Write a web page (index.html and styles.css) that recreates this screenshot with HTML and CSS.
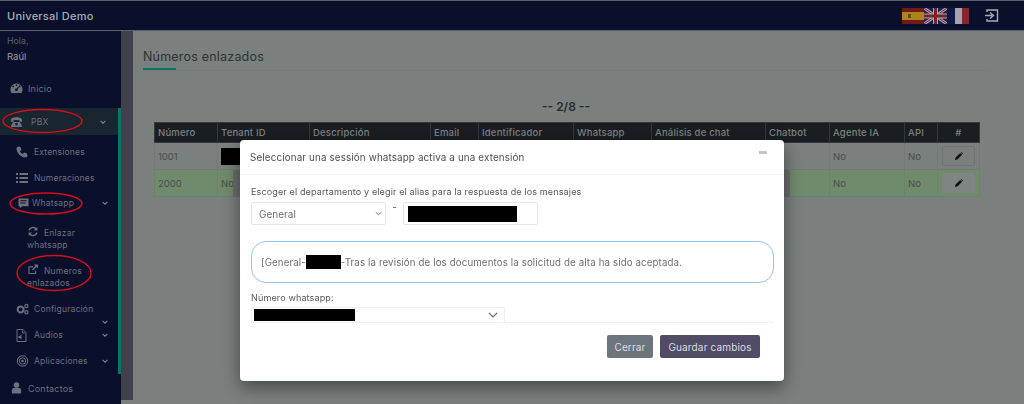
FILE: index.html
```html
<!DOCTYPE html>
<html lang="es">
<head>
<meta charset="utf-8">
<title>Números enlazados</title>
<link rel="stylesheet" href="styles.css">
</head>
<body>
<header class="topbar">
  <div class="brand">Universal Demo</div>
  <div class="top-actions">
    <svg class="flag" width="22" height="16" viewBox="0 0 22 16"><rect width="22" height="16" fill="#701a1c"/><rect y="4" width="22" height="8" fill="#a8861c"/><rect x="6" y="6" width="3" height="4" fill="#7a3a20"/></svg>
    <svg class="flag" width="23" height="16" viewBox="0 0 23 16"><rect width="23" height="16" fill="#1c2150"/><path d="M0 0L23 16M23 0L0 16" stroke="#a8a8b0" stroke-width="3"/><path d="M0 0L23 16M23 0L0 16" stroke="#7a2228" stroke-width="1"/><path d="M11.5 0V16M0 8H23" stroke="#a8a8b0" stroke-width="5"/><path d="M11.5 0V16M0 8H23" stroke="#7a2228" stroke-width="3"/></svg>
    <svg class="flag" width="22" height="16" viewBox="0 0 22 16"><rect width="8" height="16" fill="#10184a"/><rect x="8" width="7" height="16" fill="#a4a4aa"/><rect x="15" width="7" height="16" fill="#84262e"/></svg>
    <svg class="logout" width="14" height="15" viewBox="0 0 14 15" fill="none" stroke="#a9adb0" stroke-width="1.4"><path d="M2 4V2h10.500v11H2v-2"/><path d="M0 7.500h7M5 4.500l3.500 3-3.500 3"/></svg>
  </div>
</header>

<div class="shell">
  <aside class="sidebar">
    <div class="greeting">
      <div class="hola">Hola,</div>
      <div class="user">Raúl</div>
    </div>
    <a class="item top"><svg class="ic" viewBox="0 0 16 13"><path d="M8 1a7.500 7.500 0 0 0-7.500 7.500c0 1.600.5 3 1.300 4.200h12.400c.8-1.200 1.300-2.600 1.300-4.200A7.500 7.500 0 0 0 8 1zM4 3.500a1 1 0 1 1 0 2 1 1 0 0 1 0-2zM12 3.500a1 1 0 1 1 0 2 1 1 0 0 1 0-2zM8 2a1 1 0 1 1 0 2 1 1 0 0 1 0-2zM8 7l2.500-2.500.8.6L9.300 8A1.600 1.600 0 1 1 8 7z" fill-rule="evenodd"/></svg><span>Inicio</span></a>
    <div class="group">
      <a class="item head"><svg class="ic" viewBox="0 0 16 13"><path d="M1 5C1 2 4 .8 8 .8S15 2 15 5v1.200h-3.500V4h-7v2.200H1zM4 6.500h8l2.500 4V12.500H1.500v-2zM8 7.500a1.700 1.700 0 1 0 0 3.400 1.700 1.700 0 0 0 0-3.400z" fill-rule="evenodd"/></svg><span>PBX</span><svg class="chev" viewBox="0 0 10 6"><path d="M1 1l4 4 4-4"/></svg></a>
      <a class="item sub"><svg class="ic small" viewBox="0 0 12 12"><path d="M2.500.5l2 .5 1 3-1.500 1.200c.6 1.300 1.500 2.200 2.800 2.800L8 6.500l3 1 .5 2c0 1-1 2-2 2C5 11.500.5 7 .5 2.500c0-1 1-2 2-2z"/></svg><span>Extensiones</span></a>
      <a class="item sub"><svg class="ic small" viewBox="0 0 12 12"><path d="M3.500 1h8.500v2H3.500zM3.500 5h8.500v2H3.500zM3.500 9h8.500v2H3.500zM0 1h2v2H0zM0 5h2v2H0zM0 9h2v2H0z"/></svg><span>Numeraciones</span></a>
      <a class="item wa"><svg class="ic small" viewBox="0 0 12 12"><path d="M.5.5h11v8.500H4.500L2 11.500V9H.5zM2.500 2.500v1h7v-1zM2.500 5v1h5.500V5z" fill-rule="evenodd"/></svg><span>Whatsapp</span><svg class="chev" viewBox="0 0 10 6"><path d="M1 1l4 4 4-4"/></svg></a>
      <a class="leaf first"><svg class="ic leaf-ic" viewBox="0 0 12 12"><path d="M10.800 1v3.800H7l1.400-1.400A3.500 3.500 0 0 0 2.600 5L1 4.600A5.200 5.200 0 0 1 9.600 2.200zM1.200 11V7.200H5L3.600 8.600A3.500 3.500 0 0 0 9.400 7l1.600.4a5.200 5.200 0 0 1-8.600 2.400z"/></svg>Enlazar<br>whatsapp</a>
      <a class="leaf last"><svg class="ic leaf-ic" viewBox="0 0 12 12"><path d="M1 2.500h5v1.200H2.200v6.100h6.100V7h1.200v4H1zM7 .5h4.500V5L9.800 3.400 6 7.200 4.800 6 8.600 2.200z"/></svg>Numeros<br>enlazados</a>
      <a class="item cfg"><svg class="ic wide" viewBox="0 0 14 12"><circle cx="5" cy="6.500" r="3.200" fill="none" stroke="#6d717c" stroke-width="2.200"/><circle cx="11.200" cy="2.800" r="1.700" fill="none" stroke="#6d717c" stroke-width="1.300"/><circle cx="11.200" cy="9.500" r="1.700" fill="none" stroke="#6d717c" stroke-width="1.300"/></svg><span>Configuración</span><svg class="chev low" viewBox="0 0 10 6"><path d="M1 1l4 4 4-4"/></svg></a>
      <a class="item"><svg class="ic tall" viewBox="0 0 10 13"><path d="M1 .5h5.500L9.500 3.500v9H.5V.5zM6 1.500v2.500h2.500" fill="none" stroke="#6d717c"/><path d="M2 7h1.200L5 5.500v5L3.200 9H2z"/></svg><span>Audios</span><svg class="chev" viewBox="0 0 10 6"><path d="M1 1l4 4 4-4"/></svg></a>
      <a class="item"><svg class="ic wide" viewBox="0 0 12 12"><circle cx="6" cy="6" r="5.200" fill="none" stroke="#6d717c"/><circle cx="6" cy="6" r="3.200" fill="none" stroke="#6d717c"/><circle cx="6" cy="6" r="1.300"/></svg><span>Aplicaciones</span><svg class="chev" viewBox="0 0 10 6"><path d="M1 1l4 4 4-4"/></svg></a>
    </div>
    <a class="item top contact"><svg class="ic" viewBox="0 0 12 13"><circle cx="6" cy="3.300" r="3"/><path d="M1 12.500V9c0-1.800 1.500-2.700 2.800-2.700h4.400C9.500 6.300 11 7.200 11 9v3.500z"/></svg><span>Contactos</span></a>
  </aside>
  <div class="scrolltrack"></div>

  <main class="main">
    <div class="title-wrap"><h1 class="title">Números enlazados</h1></div>
    <div class="pager">-- 2/8 --</div>
    <div class="table-wrap">
      <table class="grid">
        <colgroup>
          <col class="c1"><col class="c2"><col class="c3"><col class="c4"><col class="c5"><col class="c6"><col class="c7"><col class="c8"><col class="c9"><col class="c10"><col class="c11">
        </colgroup>
        <thead>
          <tr><th>Número</th><th>Tenant ID</th><th>Descripción</th><th>Email</th><th>Identificador</th><th>Whatsapp</th><th>Análisis de chat</th><th>Chatbot</th><th>Agente IA</th><th>API</th><th class="mid">#</th></tr>
        </thead>
        <tbody>
          <tr><td>1001</td><td><span class="redact cell-redact"></span></td><td></td><td></td><td></td><td></td><td></td><td></td><td>No</td><td>No</td><td class="mid"><button class="edit"><svg class="pen" viewBox="0 0 10 10"><path d="M0 10l.7-3L6.500 1.200l2.300 2.300L3 9.300zM7.200.5l.8-.5 2 2-.5.800z"/></svg></button></td></tr>
          <tr class="ok"><td>2000</td><td>No a</td><td></td><td></td><td></td><td></td><td></td><td></td><td>No</td><td>No</td><td class="mid"><button class="edit fill"><svg class="pen" viewBox="0 0 10 10"><path d="M0 10l.7-3L6.500 1.200l2.300 2.300L3 9.300zM7.200.5l.8-.5 2 2-.5.800z"/></svg></button></td></tr>
        </tbody>
      </table>
      <div class="peek"></div>
    </div>
  </main>
</div>

<section class="modal">
  <div class="modal-head">
    <div class="modal-title">Seleccionar una sessión whatsapp activa a una extensión</div>
    <span class="close"></span>
  </div>
  <div class="modal-body">
    <label class="lab">Escoger el departamento y elegir el alias para la respuesta de los mensajes</label>
    <div class="pick-row">
      <div class="select dept"><span>General</span><svg class="sel-chev" viewBox="0 0 10 6"><path d="M1 1l4 4 4-4"/></svg></div>
      <span class="dash">-</span>
      <div class="alias"><span class="redact alias-redact"></span></div>
    </div>
    <div class="preview">[General-<span class="redact preview-redact"></span>-Tras la revisión de los documentos la solicitud de alta ha sido aceptada.</div>
    <label class="lab lab2">Número whatsapp:</label>
    <div class="select phone"><span class="redact phone-redact"></span><svg class="sel-chev big" viewBox="0 0 10 6"><path d="M1 1l4 4 4-4"/></svg></div>
  </div>
  <div class="modal-foot">
    <button class="btn grey">Cerrar</button>
    <button class="btn plum">Guardar cambios</button>
  </div>
</section>

<svg class="marks" width="1024" height="404" viewBox="0 0 1024 404" fill="none" stroke="#d40f18" stroke-width="1.500">
  <ellipse cx="42.500" cy="121" rx="39.500" ry="11.500"/>
  <ellipse cx="46" cy="203.500" rx="36" ry="10.500"/>
  <ellipse cx="54" cy="273" rx="37" ry="17.500"/>
</svg>
</body>
</html>
```
FILE: styles.css
```css
* { box-sizing: border-box; }
html, body { margin: 0; height: 404px; overflow: hidden; }
body {
  background: #7a807e;
  font-family: "Inter", "Open Sans", sans-serif;
  font-size: 10px;
  color: #4b4f4f;
  display: flex;
  flex-direction: column;
}
.topbar {
  height: 31px;
  flex: none;
  background: #0a0f2c;
  border-top: 1px solid #5a5e66;
  border-bottom: 1px solid #5c6268;
  display: flex;
  align-items: center;
  justify-content: space-between;
  padding: 0 25px 0 7px;
}
.brand { color: #a9adb0; font-size: 11px; letter-spacing: .25px; font-weight: 500; }
.top-actions { display: flex; align-items: center; }
.flag { display: block; }
.logout { display: block; margin-left: 16px; }

.shell { flex: 1; display: flex; min-height: 0; }
.sidebar {
  width: 121px;
  flex: none;
  background: #0a0f2c;
  color: #6d717c;
  display: flex;
  flex-direction: column;
}
.scrolltrack { width: 12px; flex: none; height: 369px; background: #3f424c; }
.greeting { padding: 2px 7px 0; height: 45px; }
.hola { font-size: 8.800px; line-height: 16px; color: #5d616c; }
.user { font-size: 9.500px; line-height: 15px; color: #9a9ea4; }
.item {
  display: flex;
  align-items: center;
  height: 26px;
  padding-left: 16px;
  padding-right: 10px;
  font-size: 8.500px;
  letter-spacing: .2px;
  white-space: nowrap;
}
.item span { flex: 1; }
.item.top { padding-left: 10px; height: 24px; font-size: 9px; }
.item.top .ic { margin-right: 5px; }
.group { margin-top: 8px; border-right: 3px solid #0c7464; height: 266px; }
.head {
  height: 27px;
  background: #19252f;
  padding-left: 10px;
  padding-right: 12px;
  margin-bottom: 4px;
}
.wa { height: 22px; padding-left: 18px; margin: 1px 0 12px; }
.ic { width: 13px; height: 12px; fill: #6d717c; flex: none; margin-right: 5px; }
.head .ic { margin-right: 8px; width: 13px; height: 12px; }
.small { width: 11px; height: 11px; margin-right: 3px; }
.sub .small { width: 12px; height: 12px; margin-right: 6px; }
.wide { width: 13px; height: 12px; margin-right: 5px; }
.tall { width: 11px; height: 13px; margin-right: 7px; }
.chev {
  width: 6px; height: 4px; flex: none;
  fill: none; stroke: #80848c; stroke-width: 1.800;
}
.low { align-self: flex-end; margin-bottom: -2px; }
.leaf {
  display: block;
  padding-left: 27px;
  font-size: 8.500px;
  letter-spacing: .2px;
  line-height: 12px;
  color: #6d717c;
}
.leaf.first { height: 38px; }
.leaf.last { height: 32px; }
.leaf-ic { width: 12px; height: 11px; margin-right: 5px; vertical-align: -1px; }
.contact { margin-top: 2px; }

.main { flex: 1; min-width: 0; padding: 0 35px 0 10px; }
.title-wrap { padding-top: 17px; height: 40px; border-bottom: 1px solid #767c7a; }
.title {
  margin: 0;
  font-size: 12.500px;
  font-weight: 400;
  letter-spacing: .2px;
  line-height: 17px;
  color: #2e3238;
}
.title::after {
  content: "";
  display: block;
  width: 33px;
  height: 2px;
  margin-top: 3px;
  background: #0c7464;
}
.pager {
  text-align: center;
  font-size: 12px;
  font-weight: 600;
  line-height: 14px;
  margin-top: 29px;
  color: #272a2c;
}
.table-wrap { position: relative; margin: 8px 0 0 11px; }
.grid { border-collapse: collapse; table-layout: fixed; width: 825px; }
.c1 { width: 63px; } .c2 { width: 92px; } .c3 { width: 121px; } .c4 { width: 48px; }
.c5 { width: 95px; } .c6 { width: 78px; } .c7 { width: 114px; } .c8 { width: 64px; }
.c9 { width: 75px; } .c10 { width: 33px; } .c11 { width: 42px; }
th {
  background: #1b1e21;
  color: #7d8284;
  height: 20px;
  font-size: 9.500px;
  font-weight: 500;
  letter-spacing: .2px;
  text-align: left;
  padding: 0 3px;
  border: 1px solid #34383b;
}
td {
  height: 27px;
  padding: 0 3px;
  font-size: 9.500px;
  color: #494d4d;
  border: 1px solid #737977;
  white-space: nowrap;
  overflow: hidden;
}
.ok td { background: #708b6c; border-color: #6a8466; }
.mid { text-align: center; }
.edit {
  width: 33px;
  height: 20px;
  padding: 0;
  background: transparent;
  border: 1px solid #6f7573;
  border-radius: 2px;
  display: inline-flex;
  align-items: center;
  justify-content: center;
  vertical-align: middle;
}
.edit.fill { background: #7e8583; border-color: #7e8583; }
.pen { width: 8px; height: 8px; fill: #111; }
.redact { display: inline-block; background: #000; vertical-align: middle; }
.cell-redact { width: 30px; height: 17px; }
.peek {
  position: absolute;
  left: 79px; top: 48px;
  width: 557px; height: 27px;
  background: #6a706e;
}

.modal {
  position: fixed;
  left: 240px; top: 140px;
  width: 544px; height: 241px;
  background: #fff;
  border-radius: 4px;
  box-shadow: 0 6px 18px rgba(0,0,0,.45);
  color: #55585c;
  display: flex;
  flex-direction: column;
}
.modal-head {
  height: 35px;
  flex: none;
  padding: 0 15px 0 10px;
  border-bottom: 1px solid #efefef;
  display: flex;
  align-items: center;
  justify-content: space-between;
}
.modal-title { font-size: 9.800px; letter-spacing: .15px; color: #4a4d55; }
.close { width: 8px; height: 3px; background: #c2c6cc; align-self: flex-start; margin-top: 11px; margin-right: 2px; }
.modal-body { padding: 10px 10px 0 11px; height: 147px; flex: none; }
.lab { display: block; font-size: 9.050px; line-height: 13px; letter-spacing: .12px; color: #55585c; }
.pick-row { display: flex; margin-top: 4px; align-items: flex-start; }
.select {
  display: flex;
  align-items: center;
  justify-content: space-between;
  background: #fff;
  border: 1px solid #e4e6e8;
  border-radius: 2px;
}
.dept { width: 135px; height: 23px; padding: 0 3px 0 7px; font-size: 10px; color: #6b6e72; }
.sel-chev { width: 7px; height: 5px; fill: none; stroke: #6a6d72; stroke-width: 1.200; flex: none; }
.sel-chev.big { width: 10px; height: 6px; }
.dash { width: 17px; text-align: center; line-height: 11px; font-size: 10px; }
.alias { width: 135px; height: 23px; border: 1px solid #e4e6e8; border-radius: 2px; display: flex; align-items: center; padding-left: 4px; }
.alias-redact { width: 109px; height: 16px; }
.preview {
  margin-top: 16px;
  height: 42px;
  width: 523px;
  border: 1px solid #94c4f5;
  border-radius: 15px;
  padding: 0 9px;
  display: flex;
  align-items: center;
  font-size: 9.700px;
  letter-spacing: .13px;
  color: #6c6f73;
  white-space: pre;
}
.preview-redact { width: 35px; height: 14px; }
.lab2 { margin-top: 8px; }
.phone { width: 254px; height: 16px; margin-top: 3px; padding: 0 6px 0 2px; border-color: #eceef0; }
.phone-redact { width: 101px; height: 12px; }
.modal-foot {
  flex: 1;
  display: flex;
  justify-content: flex-end;
  margin: 0 10px 0 11px;
  padding: 12px 14px 0 0;
  border-top: 1px solid #f1f1f1;
  gap: 7px;
  align-items: flex-start;
}
.btn {
  height: 23px;
  border: 0;
  border-radius: 2px;
  font: 10px "Inter", "Open Sans", sans-serif;
  letter-spacing: .15px;
  color: #dcdde2;
  padding: 0;
}
.grey { width: 46px; background: #6c757d; }
.plum { width: 100px; background: #514b66; }
.marks { position: fixed; left: 0; top: 0; pointer-events: none; }
```
